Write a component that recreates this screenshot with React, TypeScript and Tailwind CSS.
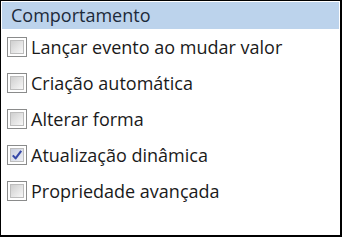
import React from "react";

const items = [
  { label: "Lançar evento ao mudar valor", checked: false },
  { label: "Criação automática", checked: false },
  { label: "Alterar forma", checked: false },
  { label: "Atualização dinâmica", checked: true },
  { label: "Propriedade avançada", checked: false },
];

const Box = ({ checked }: { checked: boolean }) => (
  <div className="w-[20px] h-[20px] border border-[#8a8b8b] bg-white p-[2px] shrink-0">
    <div
      className={
        "w-full h-full relative border border-[#bdbdbd] bg-gradient-to-br " +
        (checked ? "from-[#c9cedd] to-[#eef0f6]" : "from-[#cfcfcf] to-[#f8f8f8]")
      }
    >
      {checked && (
        <svg viewBox="0 0 12 12" className="absolute inset-0 w-full h-full">
          <path d="M1.8 6.4 L4.6 9.4 L10.2 1.8" fill="none" stroke="#3548a8" strokeWidth="2.1" strokeLinejoin="round" />
        </svg>
      )}
    </div>
  </div>
);

export default function App() {
  return (
    <div
      className="w-[342px] h-[237px] bg-white border border-black border-r-2 border-b-2 p-px"
      style={{ fontFamily: '"Open Sans", "Noto Sans", sans-serif' }}
    >
      <div className="h-[27px] bg-[#bcd3ec] flex items-center pl-[9px] text-[18px] text-[#1c2a3a]">
        Comportamento
      </div>
      <div className="flex flex-col">
        {items.map((it, i) => (
          <div key={i} className="h-[36px] flex items-center gap-[4px] pl-[5px] text-[18px] text-[#1a1a1a]">
            <Box checked={it.checked} />
            <span>{it.label}</span>
          </div>
        ))}
      </div>
    </div>
  );
}
